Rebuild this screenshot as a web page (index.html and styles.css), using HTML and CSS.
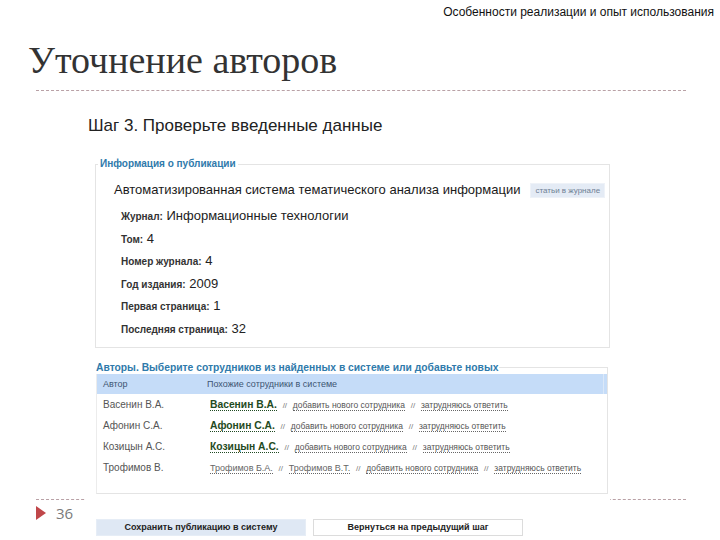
FILE: index.html
```html
<!DOCTYPE html>
<html>
<head>
	<meta charset="utf-8">
	<title>Уточнение авторов</title>
	<link rel="stylesheet" href="styles.css">
</head>
<body>
<div class="slide">
  <div class="running-head">Особенности реализации и опыт использования</div>
  <h1 class="title">Уточнение авторов</h1>
  <div class="rule"></div>

  <div class="shot">
    <div class="step">Шаг 3. Проверьте введенные данные</div>

    <fieldset class="box pub">
      <legend>Информация о публикации</legend>
      <div class="pub-title">
        <span>Автоматизированная система тематического анализа информации</span>
        <span class="mini-btn">статьи в журнале</span>
      </div>
      <div class="field"><b>Журнал:</b> Информационные технологии</div>
      <div class="field"><b>Том:</b> 4</div>
      <div class="field"><b>Номер журнала:</b> 4</div>
      <div class="field"><b>Год издания:</b> 2009</div>
      <div class="field"><b>Первая страница:</b> 1</div>
      <div class="field"><b>Последняя страница:</b> 32</div>
    </fieldset>

    <fieldset class="box authors">
      <legend>Авторы. Выберите сотрудников из найденных в системе или добавьте новых</legend>
      <table class="grid">
        <tr>
          <th class="c1">Автор</th>
          <th class="c2">Похожие сотрудники в системе</th>
          <th class="c3"></th>
        </tr>
        <tr>
          <td class="c1">Васенин В.А.</td>
          <td class="c2" colspan="2"><a class="match">Васенин В.А.</a> <i>//</i> <a>добавить нового сотрудника</a> <i>//</i> <a>затрудняюсь ответить</a></td>
        </tr>
        <tr>
          <td class="c1">Афонин С.А.</td>
          <td class="c2" colspan="2"><a class="match">Афонин С.А.</a> <i>//</i> <a>добавить нового сотрудника</a> <i>//</i> <a>затрудняюсь ответить</a></td>
        </tr>
        <tr>
          <td class="c1">Козицын А.С.</td>
          <td class="c2" colspan="2"><a class="match">Козицын А.С.</a> <i>//</i> <a>добавить нового сотрудника</a> <i>//</i> <a>затрудняюсь ответить</a></td>
        </tr>
        <tr>
          <td class="c1">Трофимов В.</td>
          <td class="c2" colspan="2"><a class="alt">Трофимов Б.А.</a> <i>//</i> <a class="alt">Трофимов В.Т.</a> <i>//</i> <a>добавить нового сотрудника</a> <i>//</i> <a>затрудняюсь ответить</a></td>
        </tr>
      </table>
    </fieldset>

    <div class="actions">
      <span class="btn save">Сохранить публикацию в систему</span>
      <span class="btn back">Вернуться на предыдущий шаг</span>
    </div>
  </div>

  <div class="slide-foot">
    <span class="marker"></span>
    <span class="num">36</span>
  </div>
</div>
</body>
</html>
```

FILE: styles.css
```css
html, body {
  margin: 0;
  padding: 0;
  background: #fff;
}

.slide {
  position: relative;
  width: 720px;
  height: 540px;
  overflow: hidden;
  font-family: "Liberation Sans", Arial, sans-serif;
}

.running-head {
  padding: 5px 6px 0 0;
  text-align: right;
  font-size: 12px;
  line-height: 14px;
  color: #111;
}

.title {
  margin: 21px 0 0 0;
  padding-left: 28px;
  font-family: "Liberation Serif", "Times New Roman", serif;
  font-weight: normal;
  font-size: 38px;
  line-height: 41px;
  color: #333;
}

.rule {
  margin: 9px 0 0 36px;
  width: 650px;
  border-top: 1px dashed #b9a1a6;
}

/* screenshot */
.shot {
  position: relative;
  z-index: 1;
  margin: 8px 0 0 86px;
  width: 522px;
  padding: 0 0 10px 2px;
  background: #fff;
}

.step {
  margin-top: 25px;
  font-size: 17px;
  line-height: 20px;
  color: #222;
}

.box {
  margin: 0;
  padding: 0;
  border: 1px solid #e4e4e4;
  min-width: 0;
}

.box legend {
  padding: 0 2px;
  font-size: 10px;
  line-height: 12px;
  font-weight: bold;
  color: #2f7aab;
}

.pub {
  margin: 22px 0 0 7px;
  padding: 12px 0 6px 18px;
}

.pub legend {
  margin-left: -16px;
}

.pub-title {
  display: flex;
  align-items: center;
  gap: 10px;
  font-size: 13px;
  line-height: 16px;
  color: #1a1a1a;
}

.mini-btn {
  padding: 0 4px;
  height: 13px;
  line-height: 13px;
  font-size: 8px;
  color: #6f7f94;
  background: #e4ebf5;
  border: 1px solid #eef2f8;
}

.pub-title + .field {
  margin-top: 7px;
}

.field {
  padding-left: 7px;
  font-size: 13px;
  line-height: 22.6px;
  color: #222;
}

.field b {
  font-size: 10px;
  line-height: 1;
  color: #333;
}

.authors {
  margin: 14px 0 0 8px;
  width: 510px;
  padding: 0 0 15px 0;
  border-left-color: #ececec;
}

.authors legend {
  margin-left: -1px;
  padding: 0 1px 0 0;
  font-size: 10.3px;
}

.grid {
  width: 100%;
  border-collapse: collapse;
}

.grid th {
  height: 20px;
  padding: 0;
  background: #c5dcf8;
  text-align: left;
  font-weight: normal;
  font-size: 9px;
  color: #3d5572;
}

.grid td {
  height: 21px;
  padding: 0;
  font-size: 10px;
  color: #555;
  white-space: nowrap;
}

.grid .c1 {
  width: 104px;
  padding-left: 6px;
}

.grid th.c2 {
  padding-left: 0;
}

.grid td.c2 {
  padding-left: 3px;
}

.grid th.c3 {
  width: 3px;
  border-left: 1px solid #dbe8f8;
}

.grid a {
  font-size: 8.5px;
  color: #555;
  border-bottom: 1px dotted #666;
}

.grid a.match {
  font-size: 10.3px;
  font-weight: bold;
  color: #1f4a22;
  border-bottom-color: #1f4a22;
}

.grid a.alt {
  font-size: 9px;
  color: #666;
}

.grid i {
  font-style: normal;
  font-size: 8px;
  color: #777;
  padding: 0 3px;
}

.actions {
  display: flex;
  gap: 7px;
  margin: 25px 0 0 8px;
}

.btn {
  width: 208px;
  height: 15px;
  line-height: 15px;
  text-align: center;
  font-size: 9px;
  font-weight: bold;
  color: #222;
}

.save {
  background: #dfe8f4;
  border: 1px solid #e6edf6;
}

.back {
  background: #fff;
  border: 1px solid #dcdcdc;
}

/* slide footer, sits under the screenshot */
.slide-foot {
  position: absolute;
  left: 36px;
  top: 499px;
  width: 650px;
  border-top: 1px dashed #b9a1a6;
  display: flex;
  align-items: center;
  gap: 10px;
  padding-top: 5px;
}

.marker {
  width: 0;
  height: 0;
  border-top: 7px solid transparent;
  border-bottom: 7px solid transparent;
  border-left: 10px solid #c0474a;
}

.num {
  font-family: "Open Sans", sans-serif;
  font-size: 15px;
  line-height: 16px;
  color: #7a7a7a;
}
```
